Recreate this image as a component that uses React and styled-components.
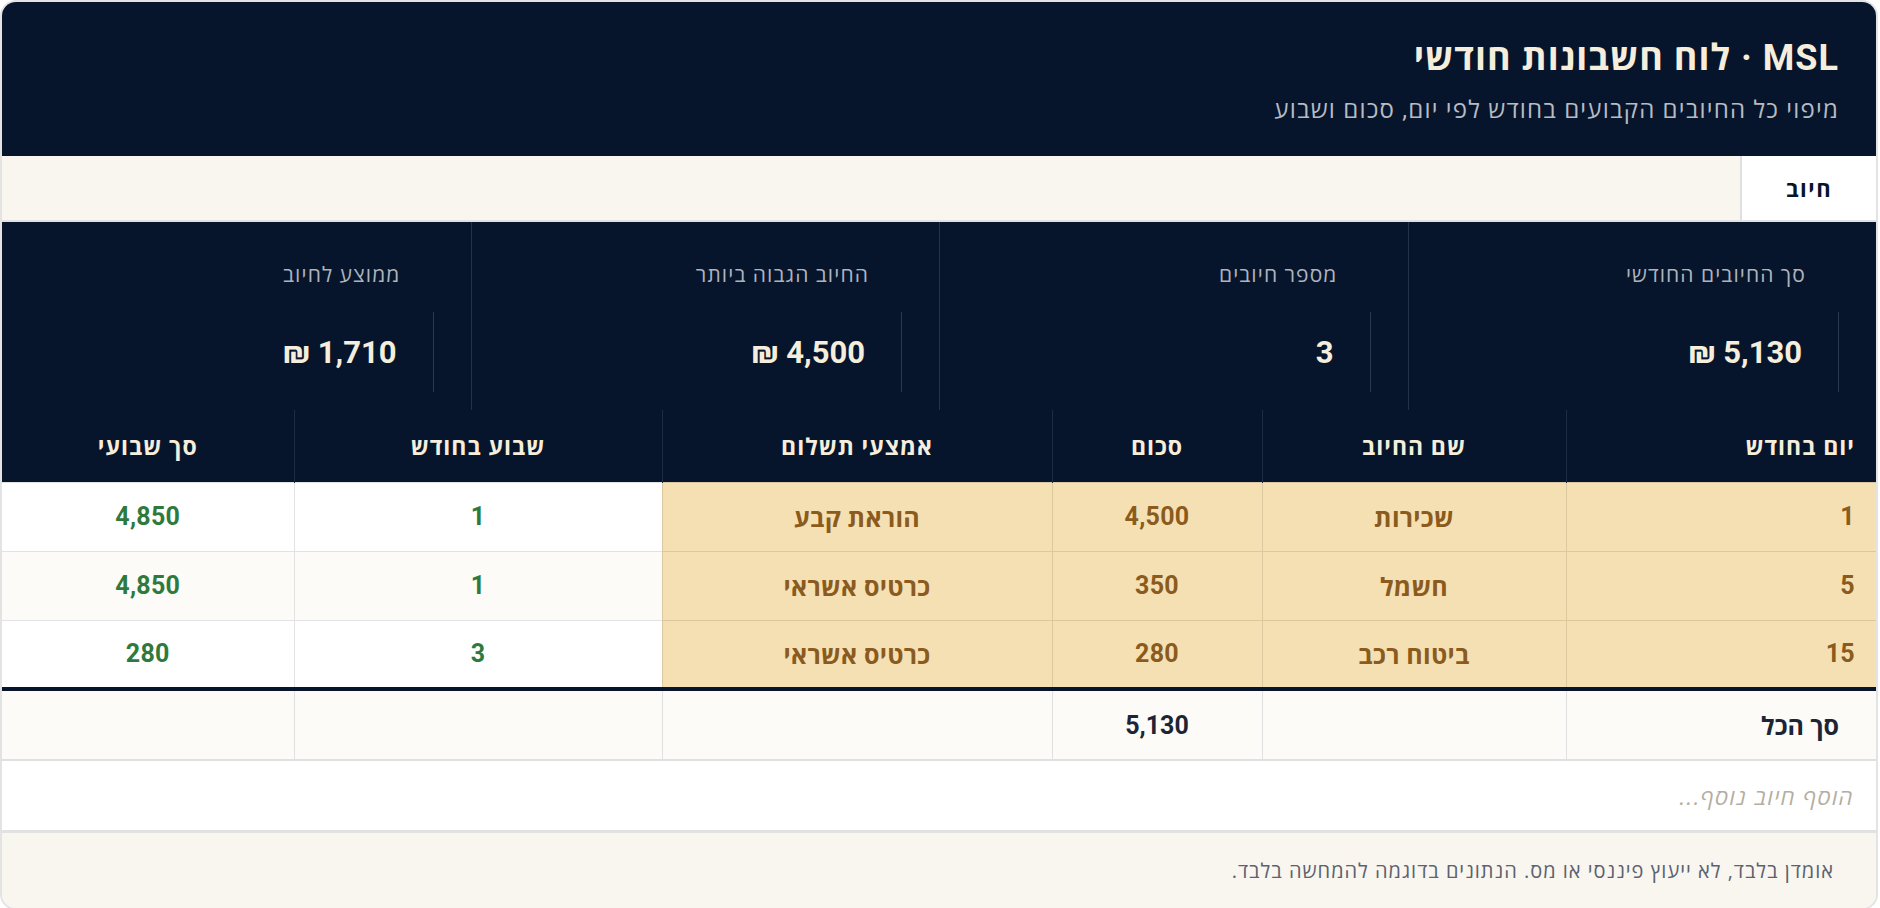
import React from 'react';
import styled, { createGlobalStyle } from 'styled-components';

const navy = '#06152c';
const cream = '#f6eedd';

const GlobalStyle = createGlobalStyle`
    html, body {
        margin: 0;
        padding: 0;
        background: #ffffff;
    }
    body {
        font-family: Roboto, "Open Sans", sans-serif;
    }
    * {
        box-sizing: border-box;
    }
`
const Page = styled.div`
    padding: 0 2px 1px 0;
`
const Card = styled.div`
    direction: rtl;
    border: 2px solid #e3e3e3;
    border-radius: 16px;
    overflow: hidden;
    background: #ffffff;
`
const Header = styled.header`
    background: ${navy};
    height: 154px;
    padding: 34px 37px 0;
    display: flex;
    flex-direction: column;
    gap: 15px;

    h1 {
        margin: 0;
        font-size: 36px;
        line-height: 44px;
        font-weight: 700;
        letter-spacing: 1px;
        color: ${cream};
    }

    p {
        margin: 0;
        font-size: 24px;
        line-height: 30px;
        letter-spacing: 1.2px;
        color: #b7bbc3;
    }
`
const TabBar = styled.nav`
    height: 66px;
    background: #f9f6ef;
    border-bottom: 2px solid #e2e2e2;
    display: flex;
`
const Tab = styled.div`
    width: 136px;
    background: ${({ active }) => active ? '#ffffff' : 'transparent'};
    border-left: 2px solid #e0e0e0;
    display: flex;
    align-items: center;
    justify-content: center;
    font-size: 22px;
    font-weight: 700;
    letter-spacing: 1.5px;
    color: ${navy};
`
const Stats = styled.section`
    background: ${navy};
    display: grid;
    grid-template-columns: repeat(4, 1fr);
    height: 188px;
`
const Stat = styled.div`
    padding: 40px 37px 0 0;
    border-left: ${({ last }) => last ? 'none' : '1px solid #243249'};

    .label {
        padding-right: 33px;
        font-size: 21px;
        line-height: 26px;
        letter-spacing: 1.1px;
        color: #aeb3bc;
    }

    .value {
        margin-top: 24px;
        height: 80px;
        border-right: 1px solid #2a3850;
        padding-right: 36px;
        display: flex;
        align-items: center;
        font-size: 31px;
        font-weight: 700;
        color: ${cream};
    }
`
const Table = styled.table`
    width: 100%;
    border-collapse: collapse;
    table-layout: fixed;
`
const HeadCell = styled.th`
    height: 72px;
    background: ${navy};
    color: ${cream};
    font-size: 23px;
    font-weight: 700;
    letter-spacing: 1px;
    text-align: ${({ start }) => start ? 'right' : 'center'};
    padding: 0 21px;
    border-left: 1px solid #1e2b41;

    &:last-child {
        border-left: none;
    }
`
const Cell = styled.td`
    height: 69px;
    font-size: 25px;
    font-weight: 700;
    letter-spacing: 0.3px;
    padding: 0 21px;
    text-align: ${({ start }) => start ? 'right' : 'center'};
    background: ${({ tone, alt }) => tone === 'gold' ? '#f5e0b4' : alt ? '#fcfbf7' : '#ffffff'};
    color: ${({ tone }) => tone === 'gold' ? '#8a5b1d' : '#2e7a3d'};
    border: 1px solid ${({ tone }) => tone === 'gold' ? '#dbc89f' : '#e2e2e2'};

    &:first-child {
        border-right: none;
    }
    &:last-child {
        border-left: none;
    }
`
const LastRow = styled.tr`
    td {
        border-bottom: 4px solid ${navy};
    }
`
const TotalCell = styled.td`
    height: 71px;
    background: #fcfbf7;
    color: #1c2536;
    font-size: 25px;
    font-weight: 700;
    padding: ${({ start }) => start ? '0 37px 0 22px' : '0 22px'};
    text-align: ${({ start }) => start ? 'right' : 'center'};
    border-left: 1px solid #e0e0e0;
    border-bottom: 2px solid #e0e0e0;

    &:last-child {
        border-left: none;
    }
`
const AddRow = styled.div`
    height: 72px;
    border-bottom: 3px solid #e1e1e1;
    display: flex;
    align-items: center;
    padding: 0 22px;
    font-size: 22px;
    font-style: italic;
    letter-spacing: 1.6px;
    color: #b4ae9f;
    font-family: "Open Sans", Roboto, sans-serif;
`
const Footer = styled.footer`
    height: 75px;
    background: #f9f6ef;
    display: flex;
    align-items: center;
    padding: 0 42px;
    font-size: 20px;
    letter-spacing: 1px;
    color: #5b6270;
    font-family: "Open Sans", Roboto, sans-serif;
`

const stats = [
    { label: 'סך החיובים החודשי', value: '5,130 ₪' },
    { label: 'מספר חיובים', value: '3' },
    { label: 'החיוב הגבוה ביותר', value: '4,500 ₪' },
    { label: 'ממוצע לחיוב', value: '1,710 ₪' },
]

const columns = [
    { title: 'יום בחודש', width: 310, start: true },
    { title: 'שם החיוב', width: 304 },
    { title: 'סכום', width: 210 },
    { title: 'אמצעי תשלום', width: 390 },
    { title: 'שבוע בחודש', width: 368 },
    { title: 'סך שבועי', width: 292 },
]

const rows = [
    { day: '1', name: 'שכירות', amount: '4,500', method: 'הוראת קבע', week: '1', weekly: '4,850' },
    { day: '5', name: 'חשמל', amount: '350', method: 'כרטיס אשראי', week: '1', weekly: '4,850' },
    { day: '15', name: 'ביטוח רכב', amount: '280', method: 'כרטיס אשראי', week: '3', weekly: '280' },
]

const BillRow = ({ row, alt }) => (
    <>
        <Cell tone="gold" start>{row.day}</Cell>
        <Cell tone="gold">{row.name}</Cell>
        <Cell tone="gold">{row.amount}</Cell>
        <Cell tone="gold">{row.method}</Cell>
        <Cell alt={alt}>{row.week}</Cell>
        <Cell alt={alt}>{row.weekly}</Cell>
    </>
)

const App = () => {
    return (
        <Page>
            <GlobalStyle />
            <Card>
                <Header>
                    <h1>MSL · לוח חשבונות חודשי</h1>
                    <p>מיפוי כל החיובים הקבועים בחודש לפי יום, סכום ושבוע</p>
                </Header>
                <TabBar>
                    <Tab active>חיוב</Tab>
                </TabBar>
                <Stats>
                    {stats.map((s, i) => (
                        <Stat key={s.label} last={i === stats.length - 1}>
                            <div className="label">{s.label}</div>
                            <div className="value">{s.value}</div>
                        </Stat>
                    ))}
                </Stats>
                <Table>
                    <colgroup>
                        {columns.map((c) => <col key={c.title} style={{ width: c.width }} />)}
                    </colgroup>
                    <thead>
                        <tr>
                            {columns.map((c) => <HeadCell key={c.title} start={c.start}>{c.title}</HeadCell>)}
                        </tr>
                    </thead>
                    <tbody>
                        {rows.map((row, i) => i === rows.length - 1
                            ? <LastRow key={row.day}><BillRow row={row} alt={i % 2 === 1} /></LastRow>
                            : <tr key={row.day}><BillRow row={row} alt={i % 2 === 1} /></tr>
                        )}
                        <tr>
                            <TotalCell start>סך הכל</TotalCell>
                            <TotalCell />
                            <TotalCell>5,130</TotalCell>
                            <TotalCell />
                            <TotalCell />
                            <TotalCell />
                        </tr>
                    </tbody>
                </Table>
                <AddRow>הוסף חיוב נוסף...</AddRow>
                <Footer>אומדן בלבד, לא ייעוץ פיננסי או מס. הנתונים בדוגמה להמחשה בלבד.</Footer>
            </Card>
        </Page>
    );
}

export default App;
